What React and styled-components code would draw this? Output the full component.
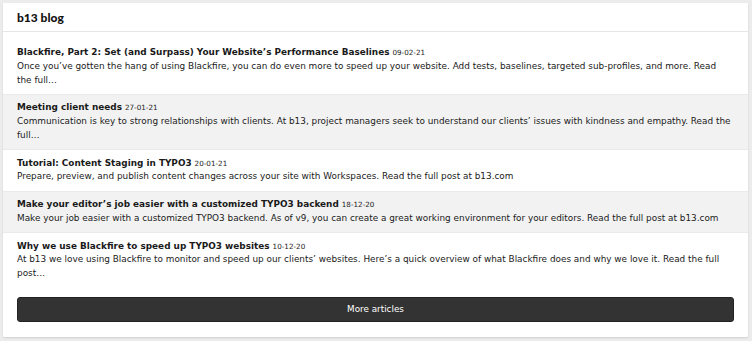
import styled, { createGlobalStyle } from "styled-components";

const GlobalStyle = createGlobalStyle`
  html, body {
    margin: 0;
    background: #ececec;
  }
  body {
    font-family: Verdana, "DejaVu Sans", sans-serif;
    color: #1a1a1a;
  }
`;

const Page = styled.div`
  padding: 3px 4px 4px 3px;
`;

const Card = styled.section`
  background: #fff;
  box-shadow: 0 1px 2px rgba(0, 0, 0, 0.12);
  border-radius: 1px;
`;

const CardHeader = styled.header`
  height: 28px;
  display: flex;
  align-items: center;
  padding: 0 14px;
  border-bottom: 1px solid #e6e6e6;
  font-family: Lato, "Open Sans", sans-serif;
  font-size: 12px;
  font-weight: 900;
  color: #111;
`;

const List = styled.ul`
  list-style: none;
  margin: 0;
  padding: 7px 0 0;
`;

const Item = styled.li`
  padding: 7px 14px;
  font-size: 8.9px;
  line-height: 13.75px;
  background: ${(props) => (props.$shaded ? "#f2f2f2" : "#fff")};
  box-shadow: ${(props) =>
    props.$shaded ? "inset 0 1px 0 #eaeaea, inset 0 -1px 0 #eaeaea" : "none"};
`;

const Title = styled.strong`
  font-size: 8.9px;
  font-weight: bold;
`;

const Date = styled.span`
  font-size: 7.2px;
  margin-left: 3px;
`;

const Teaser = styled.p`
  margin: 0;
`;

const Footer = styled.div`
  padding: 9px 14px 15px;
`;

const MoreButton = styled.button`
  display: block;
  width: 100%;
  height: 25px;
  border: 1px solid #222;
  border-radius: 3px;
  background: #333;
  color: #fff;
  font-family: inherit;
  font-size: 8.8px;
  cursor: pointer;
`;

const posts = [
  {
    title: "Blackfire, Part 2: Set (and Surpass) Your Website’s Performance Baselines",
    date: "09-02-21",
    teaser:
      "Once you’ve gotten the hang of using Blackfire, you can do even more to speed up your website. Add tests, baselines, targeted sub-profiles, and more. Read the\u00a0full…",
  },
  {
    title: "Meeting client needs",
    date: "27-01-21",
    teaser:
      "Communication is key to strong relationships with clients. At b13, project managers seek to understand our clients’ issues with kindness and empathy. Read the full…",
  },
  {
    title: "Tutorial: Content Staging in TYPO3",
    date: "20-01-21",
    teaser:
      "Prepare, preview, and publish content changes across your site with Workspaces. Read the full post at b13.com",
  },
  {
    title: "Make your editor’s job easier with a customized TYPO3 backend",
    date: "18-12-20",
    teaser:
      "Make your job easier with a customized TYPO3 backend. As of v9, you can create a great working environment for your editors. Read the full post at b13.com",
  },
  {
    title: "Why we use Blackfire to speed up TYPO3 websites",
    date: "10-12-20",
    teaser:
      "At b13 we love using Blackfire to monitor and speed up our clients’ websites. Here’s a quick overview of what Blackfire does and why we love it. Read the full post…",
  },
];

const App = () => {
  return (
    <Page>
      <GlobalStyle />
      <Card>
        <CardHeader>b13 blog</CardHeader>
        <List>
          {posts.map((post, i) => (
            <Item key={post.date} $shaded={i % 2 === 1}>
              <Title>{post.title}</Title>
              <Date>{post.date}</Date>
              <Teaser>{post.teaser}</Teaser>
            </Item>
          ))}
        </List>
        <Footer>
          <MoreButton>More articles</MoreButton>
        </Footer>
      </Card>
    </Page>
  );
};

export default App;
